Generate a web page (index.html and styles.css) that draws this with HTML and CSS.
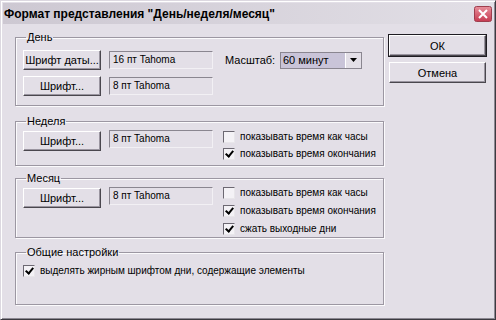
FILE: index.html
```html
<!DOCTYPE html>
<html lang="ru">
<head>
<meta charset="utf-8">
<title>Формат представления</title>
<link rel="stylesheet" href="styles.css">
</head>
<body>
<div class="window">
  <div class="titlebar">
    <span class="title">Формат представления "День/неделя/месяц"</span>
    <svg class="close" width="18" height="16" viewBox="0 0 18 16">
      <defs><linearGradient id="cg" x1="0" y1="0" x2="0" y2="1"><stop offset="0" stop-color="#e8909c"/><stop offset="1" stop-color="#c63a50"/></linearGradient></defs>
      <rect x="0.5" y="0.5" width="17" height="15" rx="2" fill="url(#cg)" stroke="#9e3e4e"/>
      <path d="M5 4 L13 12 M13 4 L5 12" stroke="#ffffff" stroke-width="2" fill="none"/>
    </svg>
  </div>
  <div class="content">
    <div class="groups">
      <fieldset class="group g-day">
        <legend>День</legend>
        <div class="row">
          <button class="btn">Шрифт даты...</button>
          <div class="field">16 пт Tahoma</div>
          <span class="lbl">Масштаб:</span>
          <div class="combo"><span class="combo-val">60 минут</span><span class="combo-arrow"><svg width="7" height="4" viewBox="0 0 7 4"><path d="M0 0 H7 L3.5 4 Z" fill="#000"/></svg></span></div>
        </div>
        <div class="row">
          <button class="btn">Шрифт...</button>
          <div class="field">8 пт Tahoma</div>
        </div>
      </fieldset>
      <fieldset class="group g-week">
        <legend>Неделя</legend>
        <div class="row top">
          <button class="btn">Шрифт...</button>
          <div class="field">8 пт Tahoma</div>
          <div class="checks">
            <label class="chk"><span class="box"></span>показывать время как часы</label>
            <label class="chk"><span class="box on"></span>показывать время окончания</label>
          </div>
        </div>
      </fieldset>
      <fieldset class="group g-month">
        <legend>Месяц</legend>
        <div class="row top">
          <button class="btn">Шрифт...</button>
          <div class="field">8 пт Tahoma</div>
          <div class="checks">
            <label class="chk"><span class="box"></span>показывать время как часы</label>
            <label class="chk"><span class="box on"></span>показывать время окончания</label>
            <label class="chk"><span class="box on"></span>сжать выходные дни</label>
          </div>
        </div>
      </fieldset>
      <fieldset class="group g-general">
        <legend>Общие настройки</legend>
        <label class="chk"><span class="box on"></span>выделять жирным шрифтом дни, содержащие элементы</label>
      </fieldset>
    </div>
    <div class="side">
      <button class="btn big default">ОК</button>
      <button class="btn big">Отмена</button>
    </div>
  </div>
</div>
</body>
</html>
```
FILE: styles.css
```css
html, body {
  margin: 0;
  padding: 0;
  background: #e3dfe7;
}
body {
  font-family: "Liberation Sans", Arial, sans-serif;
  font-size: 10px;
  color: #000;
}
.window {
  box-sizing: border-box;
  width: 496px;
  height: 320px;
  border: 1px solid;
  border-color: #dcd8e0 #3c3a40 #3c3a40 #dcd8e0;
  box-shadow: inset 1px 1px 0 #ffffff, inset -1px -1px 0 #8c8892;
  padding: 2px;
  background: #e3dfe7;
}
.titlebar {
  height: 21px;
  display: flex;
  align-items: center;
  justify-content: space-between;
  padding: 0 1px 0 1px;
  background: linear-gradient(to right, #cdc8d2, #e2dfe6);
}
.title {
  font-weight: bold;
  font-size: 12px;
}
.close {
  display: block;
  flex: none;
}
.content {
  display: flex;
  padding: 7px 0 0 12px;
}
.groups {
  width: 369px;
  display: flex;
  flex-direction: column;
}
.group {
  box-sizing: border-box;
  margin: 0;
  min-width: 0;
  border: 1px solid #9c97a2;
  box-shadow: inset 1px 1px 0 #fbfafc, 1px 1px 0 #fbfafc;
  padding: 0 6px 0 7px;
}
.group legend {
  padding: 0 1px;
  margin-left: 3px;
  line-height: 13px;
  font-size: 11px;
}
.g-day { height: 75px; padding-top: 6px; }
.g-week { height: 51px; margin-top: 9px; padding-top: 2px; }
.g-month { height: 66px; margin-top: 6px; padding-top: 1px; }
.g-general { height: 59px; margin-top: 8px; padding-top: 5px; }
.row {
  display: flex;
  align-items: center;
  margin-bottom: 6px;
}
.row.top { align-items: flex-start; }
.btn {
  font: inherit;
  font-size: 11px;
  color: #000;
  background: #e3dfe7;
  width: 78px;
  height: 20px;
  padding: 0;
  border: 1px solid;
  border-color: #ffffff #4a474e #4a474e #ffffff;
  box-shadow: inset -1px -1px 0 #9a95a0;
}
.g-week .btn { margin-top: 1px; }
.g-month .btn { margin-top: 2px; }
.field {
  width: 104px;
  height: 18px;
  margin-left: 8px;
  padding: 0 0 0 3px;
  line-height: 16px;
  border-top: 1px solid #8a8690;
  border-left: 1px solid #8a8690;
  border-bottom: 1px solid #f2f0f4;
  border-right: 1px solid #f2f0f4;
  box-sizing: border-box;
}
.g-month .field { margin-top: 1px; }
.lbl {
  margin-left: 12px;
  width: 55px;
  font-size: 11px;
}
.combo {
  width: 82px;
  height: 17px;
  display: flex;
  box-sizing: border-box;
  border: 1px solid #8a8690;
  background: #c9c4d8;
}
.combo-val {
  flex: 1;
  padding-left: 2px;
  line-height: 15px;
  font-size: 11px;
}
.combo-arrow {
  width: 15px;
  display: flex;
  align-items: center;
  justify-content: center;
  background: #e3dfe7;
  border-left: 1px solid #fff;
}
.checks {
  margin-left: 10px;
  display: flex;
  flex-direction: column;
  gap: 4px;
}
.g-month .checks { gap: 5px; }
.chk {
  display: flex;
  align-items: center;
  height: 13px;
  white-space: nowrap;
}
.box {
  width: 10px;
  height: 10px;
  margin-right: 5px;
  background: #f4f2f6;
  border: 1px solid;
  border-color: #6c6872 #e8e6ea #e8e6ea #6c6872;
  position: relative;
}
.box.on::after {
  content: "";
  position: absolute;
  left: 3px;
  top: 0px;
  width: 3px;
  height: 6px;
  border: solid #000;
  border-width: 0 2px 2px 0;
  transform: rotate(40deg);
}
.side {
  margin-left: 5px;
  padding-top: 4px;
  display: flex;
  flex-direction: column;
  gap: 6px;
}
.btn.big {
  width: 97px;
  height: 21px;
}
.btn.default {
  outline: 1px solid #1e1c22;
}
```
